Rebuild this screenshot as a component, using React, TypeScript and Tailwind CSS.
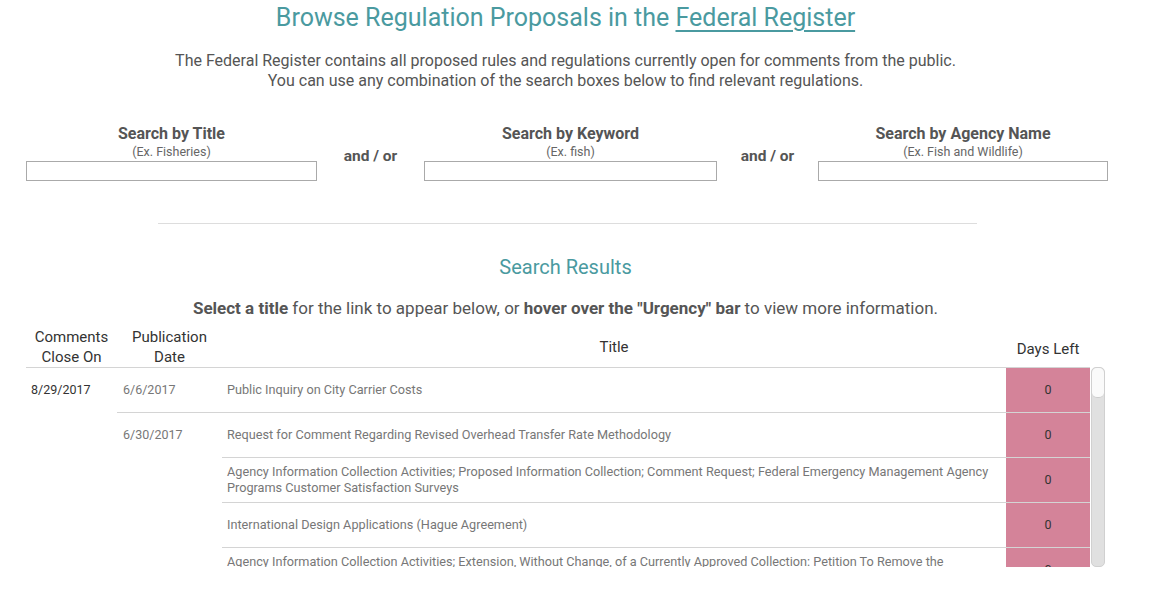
const teal = 'text-[#4a9aa0]'

interface Row {
  title: string
  days: number
}

interface Group {
  pub: string
  rows: Row[]
}

const groups: Group[] = [
  { pub: '6/6/2017', rows: [{ title: 'Public Inquiry on City Carrier Costs', days: 0 }] },
  {
    pub: '6/30/2017',
    rows: [
      { title: 'Request for Comment Regarding Revised Overhead Transfer Rate Methodology', days: 0 },
      {
        title:
          'Agency Information Collection Activities; Proposed Information Collection; Comment Request; Federal Emergency Management Agency Programs Customer Satisfaction Surveys',
        days: 0,
      },
      { title: 'International Design Applications (Hague Agreement)', days: 0 },
      {
        title:
          'Agency Information Collection Activities; Extension, Without Change, of a Currently Approved Collection: Petition To Remove the Conditions on Residence',
        days: 0,
      },
    ],
  },
]

function SearchBox({ label, hint, width }: { label: string; hint: string; width: string }) {
  return (
    <div className={`${width} flex flex-col items-center`}>
      <div className="text-[16px] font-bold text-[#555] leading-[20px]">{label}</div>
      <div className="text-[12.5px] text-[#666] leading-[16px]">{hint}</div>
      <div className="w-full h-[20px] mt-[1px] border border-[#aaa] bg-white" />
    </div>
  )
}

function AndOr({ width }: { width: string }) {
  return <div className={`${width} text-center text-[15.5px] font-bold text-[#555] pt-[21px]`}>and / or</div>
}

export default function App() {
  return (
    <div className="w-[1173px] h-[610px] bg-white overflow-hidden font-['Roboto',sans-serif]">
      <div className="w-[1131px] text-center">
        <h1 className={`${teal} text-[25px] leading-[30px] pt-[3px]`}>
          Browse Regulation Proposals in the <span className="underline underline-offset-4">Federal Register</span>
        </h1>
        <p className="mt-[18px] text-[16px] leading-[20px] text-[#555]">
          The Federal Register contains all proposed rules and regulations currently open for comments from the public.
          <br />
          You can use any combination of the search boxes below to find relevant regulations.
        </p>
      </div>

      <div className="flex pl-[26px] mt-[33px]">
        <SearchBox label="Search by Title" hint="(Ex. Fisheries)" width="w-[291px]" />
        <AndOr width="w-[107px]" />
        <SearchBox label="Search by Keyword" hint="(Ex. fish)" width="w-[293px]" />
        <AndOr width="w-[101px]" />
        <SearchBox label="Search by Agency Name" hint="(Ex. Fish and Wildlife)" width="w-[290px]" />
      </div>

      <div className="ml-[158px] w-[819px] h-px bg-[#ddd] mt-[42px]" />

      <div className="w-[1131px] text-center">
        <h2 className={`${teal} text-[20px] leading-[26px] mt-[30px]`}>Search Results</h2>
        <p className="mt-[18px] text-[17px] leading-[20px] text-[#555]">
          <b>Select a title</b> for the link to appear below, or <b>hover over the "Urgency" bar</b> to view more
          information.
        </p>
      </div>

      <div className="ml-[26px] mt-[9px] w-[1080px]">
        <div className="flex h-[40px] text-[15px] leading-[20px] text-[#333]">
          <div className="w-[91px] text-center">
            Comments
            <br />
            Close On
          </div>
          <div className="w-[105px] text-center">
            Publication
            <br />
            Date
          </div>
          <div className="w-[784px] flex items-center justify-center">Title</div>
          <div className="w-[84px] flex items-center justify-center pt-[4px]">Days Left</div>
        </div>

        <div className="flex h-[200px] overflow-hidden border-t border-[#d4d4d4] w-[1064px]">
          <div className="w-[91px] shrink-0">
            <div className="h-[44px] flex items-center pl-[5px] text-[12.5px] text-[#333]">8/29/2017</div>
          </div>
          <div className="flex flex-col w-[973px]">
            {groups.map((g) => (
              <div key={g.pub} className="flex border-b border-[#d4d4d4]">
                <div className="w-[105px] shrink-0 h-[44px] flex items-center pl-[6px] text-[12.5px] text-[#777]">
                  {g.pub}
                </div>
                <div className="flex flex-col flex-1">
                  {g.rows.map((r, i) => (
                    <div
                      key={i}
                      className={`flex shrink-0 ${i < g.rows.length - 1 ? 'h-[45px] border-b border-[#d4d4d4]' : 'h-[44px]'}`}
                    >
                      <div className="w-[784px] flex items-center px-[5px] text-[12.7px] leading-[16px] text-[#777]">
                        {r.title}
                      </div>
                      <div className="w-[84px] bg-[#d48399] flex items-center justify-center text-[12.5px] text-[#333]">
                        {r.days}
                      </div>
                    </div>
                  ))}
                </div>
              </div>
            ))}
          </div>
        </div>
        <div className="absolute top-[367px] left-[1091px] w-[14px] h-[200px] rounded-[5px] bg-[#e0e0e0] border border-[#d0d0d0]">
          <div className="h-[30px] rounded-[5px] bg-[#fafafa] border-b border-[#ccc]" />
        </div>
      </div>
    </div>
  )
}
